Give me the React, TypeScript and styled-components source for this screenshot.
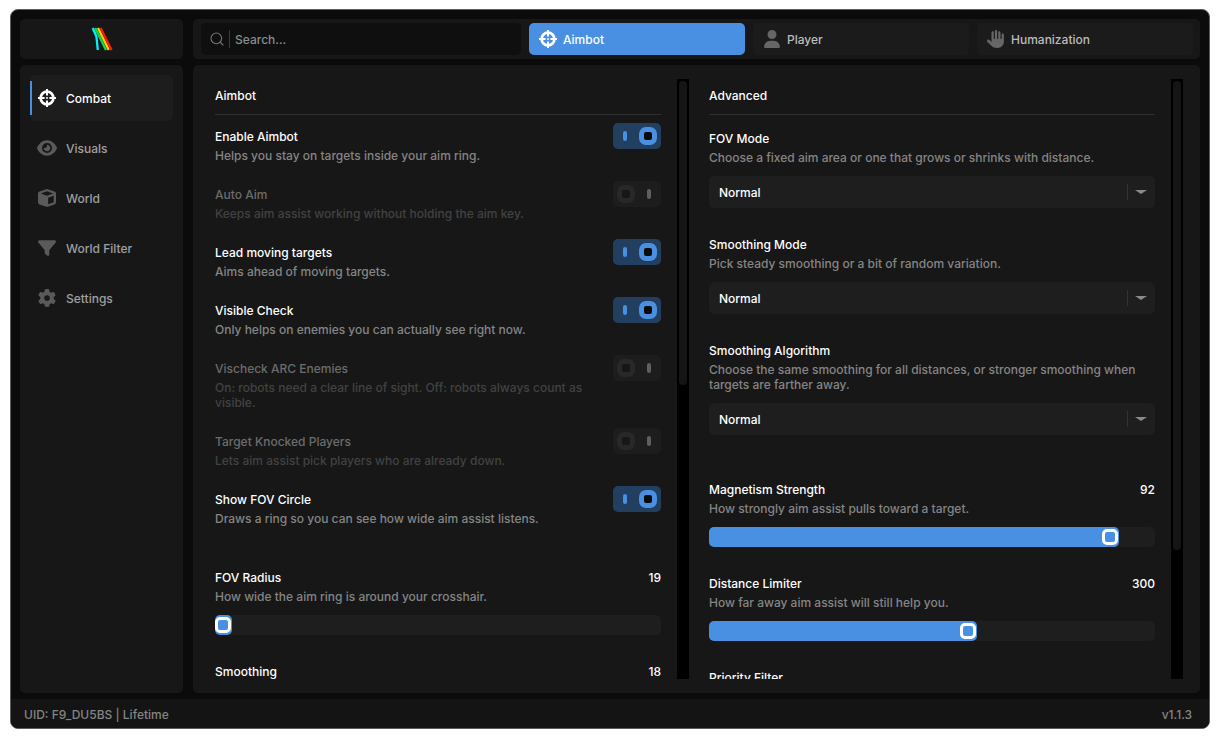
import React, { useId, useState } from "react";
import styled, { createGlobalStyle } from "styled-components";
import { FaCube, FaEye, FaFilter, FaGear, FaHand, FaUser } from "react-icons/fa6";
import { Search } from "lucide-react";

const color = {
  shell: "#0b0b0b",
  panel: "#171717",
  raised: "#1e1e1e",
  field: "#0f0f0f",
  accent: "#4a90e2",
  accentDim: "#233f60",
  line: "#303030",
  text: "#ffffff",
  muted: "#858585",
};

const GlobalStyle = createGlobalStyle`
  *, *::before, *::after { box-sizing: border-box; }
  body {
    margin: 0;
    background: #ffffff;
    font-family: Inter, "Liberation Sans", sans-serif;
    font-size: 12px;
    font-weight: 500;
    line-height: 15px;
  }
  button, input, select { font: inherit; }
  h2, h3, p { margin: 0; font: inherit; }
`;

const Page = styled.div`
  height: 100vh;
  padding: 9px 10px;
`;

const Shell = styled.div`
  height: 100%;
  display: flex;
  flex-direction: column;
  gap: 6px;
  overflow: hidden;
  border: 1px solid #5c5c5c;
  border-radius: 8px;
  background: ${color.shell};
  color: ${color.text};
`;

const Workspace = styled.div`
  flex: 1;
  min-height: 0;
  display: grid;
  grid-template-columns: 163px minmax(0, 1fr);
  grid-template-rows: 40px minmax(0, 1fr);
  gap: 6px 10px;
  padding: 9px 9px 0;
`;

const Panel = styled.div`
  border-radius: 5px;
  background: ${color.panel};
`;

const LogoPanel = styled(Panel)`
  display: flex;
  align-items: center;
  justify-content: center;
`;

const TopBar = styled(Panel).attrs({ as: "header" })`
  display: grid;
  grid-template-columns: minmax(0, 320fr) repeat(3, minmax(0, 216fr));
  gap: 8px;
  padding: 4px 7px 4px 8px;
`;

const SearchBox = styled.label`
  display: flex;
  align-items: center;
  gap: 4px;
  padding: 0 8px;
  border-radius: 5px;
  background: ${color.field};
  color: #777777;
`;

const SearchRule = styled.span`
  width: 1px;
  height: 18px;
  background: #3a3a3a;
`;

const SearchInput = styled.input`
  flex: 1;
  min-width: 0;
  padding: 0 1px;
  border: 0;
  outline: 0;
  background: transparent;
  color: ${color.text};
  &::placeholder { color: #8c8c8c; opacity: 1; }
`;

const Tab = styled.button<{ $active: boolean }>`
  display: flex;
  align-items: center;
  gap: 6px;
  padding: 0 10px;
  border: 0;
  border-radius: 5px;
  background: ${(p) => (p.$active ? color.accent : "#1b1b1b")};
  color: ${(p) => (p.$active ? "#ffffff" : "#bcbcbc")};
  cursor: pointer;
  svg { color: ${(p) => (p.$active ? "#ffffff" : "#666666")}; }
`;

const SideNav = styled(Panel).attrs({ as: "nav" })`
  display: flex;
  flex-direction: column;
  gap: 4px;
  padding: 10px;
`;

const NavItem = styled.button<{ $active: boolean }>`
  height: 46px;
  display: flex;
  align-items: center;
  gap: 4px;
  padding: 0;
  border: 0;
  border-radius: 5px;
  background: ${(p) => (p.$active ? "#1d1d1d" : "transparent")};
  color: ${(p) => (p.$active ? "#ffffff" : "#a0a0a0")};
  cursor: pointer;
  &::before {
    content: "";
    width: 2px;
    height: 34px;
    background: ${(p) => (p.$active ? color.accent : "transparent")};
  }
`;

const NavIcon = styled.span<{ $active: boolean }>`
  width: 22px;
  margin-right: 4px;
  display: flex;
  justify-content: center;
  color: ${(p) => (p.$active ? "#ffffff" : "#5a5a5a")};
`;

const Content = styled(Panel).attrs({ as: "main" })`
  display: grid;
  grid-template-columns: repeat(2, minmax(0, 1fr));
  gap: 20px;
  padding: 14px 17px 14px 22px;
`;

const Column = styled.section`
  min-height: 0;
  display: flex;
  gap: 16px;
`;

const ColumnBody = styled.div`
  flex: 1;
  min-width: 0;
  overflow-y: auto;
  scrollbar-width: none;
`;

const ScrollRail = styled.div`
  width: 12px;
  padding: 2px;
  background: #000000;
`;

const ScrollThumb = styled.div`
  border-radius: 4px;
  background: #151515;
`;

const SectionTitle = styled.h2`
  padding: 9px 0 11px;
  border-bottom: 1px solid ${color.line};
`;

const ToggleList = styled.div`
  padding-top: 8px;
`;

const ToggleRow = styled.div`
  display: flex;
  align-items: flex-start;
  justify-content: space-between;
  gap: 16px;
  padding-bottom: 18px;
`;

const ToggleText = styled.div<{ $dim: boolean }>`
  padding-top: 6px;
  color: ${(p) => (p.$dim ? "#6c6c6c" : color.text)};
  p { color: ${(p) => (p.$dim ? "#424242" : color.muted)}; }
`;

const Label = styled.label`
  display: block;
  margin-bottom: 4px;
`;

const Description = styled.p`
  color: ${color.muted};
`;

const Switch = styled.input`
  appearance: none;
  flex: none;
  width: 48px;
  height: 26px;
  margin: 0;
  padding: 0 4px 0 10px;
  display: flex;
  align-items: center;
  justify-content: space-between;
  border-radius: 5px;
  background: ${color.accentDim};
  cursor: pointer;
  &::before {
    content: "";
    width: 4px;
    height: 10px;
    border-radius: 2px;
    background: ${color.accent};
  }
  &::after {
    content: "";
    width: 18px;
    height: 18px;
    border: 5px solid ${color.accent};
    border-radius: 7px;
    background: ${color.shell};
  }
  &:not(:checked) {
    flex-direction: row-reverse;
    padding: 0 10px 0 4px;
    background: #1d1d1d;
  }
  &:not(:checked)::before { background: #5f5f5f; }
  &:not(:checked)::after { border-color: #282828; background: #171717; }
`;

const FieldGroup = styled.div<{ $top: number }>`
  display: flex;
  flex-direction: column;
  gap: 29px;
  padding-top: ${(p) => p.$top}px;
`;

const FieldHead = styled.div`
  display: flex;
  justify-content: space-between;
`;

const SelectFrame = styled.div`
  display: grid;
  align-items: center;
  margin-top: 11px;
  border-radius: 5px;
  background: ${color.raised};
  > * { grid-area: 1 / 1; }
`;

const SelectInput = styled.select`
  appearance: none;
  width: 100%;
  height: 32px;
  padding: 0 40px 0 10px;
  border: 0;
  border-radius: 5px;
  background: transparent;
  color: ${color.text};
  option { background: ${color.raised}; }
`;

const SelectMark = styled.span`
  justify-self: end;
  display: flex;
  align-items: center;
  height: 16px;
  padding: 0 8px 0 7px;
  border-left: 1px solid #333333;
  pointer-events: none;
`;

const SliderFrame = styled.div`
  display: grid;
  align-items: center;
  height: 20px;
  margin-top: 11px;
  border-radius: 5px;
  background: ${color.raised};
  > * { grid-area: 1 / 1; }
`;

const SliderFill = styled.span`
  display: flex;
  align-items: center;
  justify-content: flex-end;
  min-width: 17px;
  height: 20px;
  padding-right: 1px;
  border-radius: 5px;
  background: ${color.accent};
  &::after {
    content: "";
    width: 16px;
    height: 16px;
    border: 3px solid #ffffff;
    border-radius: 5px;
  }
`;

const SliderInput = styled.input`
  width: 100%;
  height: 20px;
  margin: 0;
  opacity: 0;
  cursor: pointer;
`;

const Footer = styled.footer`
  height: 29px;
  display: flex;
  align-items: center;
  justify-content: space-between;
  padding: 2px 17px 0 13px;
  background: #141414;
  color: ${color.muted};
`;

function Logo() {
  return (
    <svg width="24" height="24" viewBox="0 0 24 24" fill="none" strokeWidth="2.3" role="img" aria-label="Logo">
      <path d="M2.7 1 6.4 9.5 7.8 23" stroke="#00f0ff" />
      <path d="M5.2 1 16 23" stroke="#00e05a" />
      <path d="M8 1 18.8 23" stroke="#ffd000" />
      <path d="M10.6 1 21.6 23" stroke="#ff1a00" />
    </svg>
  );
}

function Crosshair({ size = 18 }: { size?: number }) {
  return (
    <svg width={size} height={size} viewBox="0 0 18 18" fill="none" stroke="currentColor">
      <circle cx="9" cy="9" r="6.4" strokeWidth="2.7" />
      <path d="M9 0v6.6M9 11.4V18M0 9h6.6M11.4 9H18" strokeWidth="2" />
      <circle cx="9" cy="9" r="1" fill="currentColor" stroke="none" />
    </svg>
  );
}

type ToggleProps = { title: string; text: string; on?: boolean };

function Toggle({ title, text, on = false }: ToggleProps) {
  const id = useId();
  const [checked, setChecked] = useState(on);
  return (
    <ToggleRow>
      <ToggleText $dim={!checked}>
        <Label htmlFor={id}>{title}</Label>
        <Description>{text}</Description>
      </ToggleText>
      <Switch id={id} type="checkbox" checked={checked} onChange={(e) => setChecked(e.target.checked)} />
    </ToggleRow>
  );
}

function Dropdown({ title, text }: { title: string; text?: string }) {
  const id = useId();
  return (
    <div>
      <Label htmlFor={id}>{title}</Label>
      {text && <Description>{text}</Description>}
      <SelectFrame>
        <SelectInput id={id} defaultValue="Normal">
          <option>Normal</option>
        </SelectInput>
        <SelectMark>
          <svg width="12" height="4" viewBox="0 0 12 4">
            <path d="M0 0h12L6 4z" fill="#8a8a8a" />
          </svg>
        </SelectMark>
      </SelectFrame>
    </div>
  );
}

type SliderProps = { title: string; text?: string; value: number; min?: number; max: number };

function Slider({ title, text, value, min = 0, max }: SliderProps) {
  const id = useId();
  const [current, setCurrent] = useState(value);
  return (
    <div>
      <FieldHead>
        <Label htmlFor={id}>{title}</Label>
        <output htmlFor={id}>{current}</output>
      </FieldHead>
      {text && <Description>{text}</Description>}
      <SliderFrame>
        <SliderFill style={{ width: `${((current - min) / (max - min)) * 100}%` }} />
        <SliderInput
          id={id}
          type="range"
          min={min}
          max={max}
          value={current}
          onChange={(e) => setCurrent(Number(e.target.value))}
        />
      </SliderFrame>
    </div>
  );
}

const tabs = [
  { name: "Aimbot", Icon: Crosshair },
  { name: "Player", Icon: FaUser },
  { name: "Humanization", Icon: FaHand },
];

const sections = [
  { name: "Combat", Icon: Crosshair, size: 18 },
  { name: "Visuals", Icon: FaEye, size: 20 },
  { name: "World", Icon: FaCube, size: 18 },
  { name: "World Filter", Icon: FaFilter, size: 18 },
  { name: "Settings", Icon: FaGear, size: 18 },
];

const toggles: ToggleProps[] = [
  { title: "Enable Aimbot", text: "Helps you stay on targets inside your aim ring.", on: true },
  { title: "Auto Aim", text: "Keeps aim assist working without holding the aim key." },
  { title: "Lead moving targets", text: "Aims ahead of moving targets.", on: true },
  { title: "Visible Check", text: "Only helps on enemies you can actually see right now.", on: true },
  {
    title: "Vischeck ARC Enemies",
    text: "On: robots need a clear line of sight. Off: robots always count as visible.",
  },
  { title: "Target Knocked Players", text: "Lets aim assist pick players who are already down." },
  { title: "Show FOV Circle", text: "Draws a ring so you can see how wide aim assist listens.", on: true },
];

export default function App() {
  const [tab, setTab] = useState("Aimbot");
  const [section, setSection] = useState("Combat");
  return (
    <Page>
      <GlobalStyle />
      <Shell>
        <Workspace>
          <LogoPanel>
            <Logo />
          </LogoPanel>
          <TopBar>
            <SearchBox>
              <Search size={16} strokeWidth={1.6} />
              <SearchRule />
              <SearchInput type="text" placeholder="Search..." aria-label="Search" />
            </SearchBox>
            {tabs.map(({ name, Icon }) => (
              <Tab key={name} type="button" $active={name === tab} onClick={() => setTab(name)}>
                <Icon size={18} />
                {name}
              </Tab>
            ))}
          </TopBar>
          <SideNav>
            {sections.map(({ name, Icon, size }) => (
              <NavItem key={name} type="button" $active={name === section} onClick={() => setSection(name)}>
                <NavIcon $active={name === section}>
                  <Icon size={size} />
                </NavIcon>
                {name}
              </NavItem>
            ))}
          </SideNav>
          <Content>
            <Column>
              <ColumnBody>
                <SectionTitle>Aimbot</SectionTitle>
                <ToggleList>
                  {toggles.map((t) => (
                    <Toggle key={t.title} {...t} />
                  ))}
                </ToggleList>
                <FieldGroup $top={26}>
                  <Slider
                    title="FOV Radius"
                    text="How wide the aim ring is around your crosshair."
                    value={19}
                    min={10}
                    max={500}
                  />
                  <Slider title="Smoothing" value={18} max={100} />
                </FieldGroup>
              </ColumnBody>
              <ScrollRail>
                <ScrollThumb style={{ height: "51%" }} />
              </ScrollRail>
            </Column>
            <Column>
              <ColumnBody>
                <SectionTitle>Advanced</SectionTitle>
                <FieldGroup $top={16}>
                  <Dropdown
                    title="FOV Mode"
                    text="Choose a fixed aim area or one that grows or shrinks with distance."
                  />
                  <Dropdown title="Smoothing Mode" text="Pick steady smoothing or a bit of random variation." />
                  <Dropdown
                    title="Smoothing Algorithm"
                    text="Choose the same smoothing for all distances, or stronger smoothing when targets are farther away."
                  />
                </FieldGroup>
                <FieldGroup $top={47}>
                  <Slider
                    title="Magnetism Strength"
                    text="How strongly aim assist pulls toward a target."
                    value={92}
                    max={100}
                  />
                  <Slider
                    title="Distance Limiter"
                    text="How far away aim assist will still help you."
                    value={300}
                    max={500}
                  />
                  <Dropdown title="Priority Filter" />
                </FieldGroup>
              </ColumnBody>
              <ScrollRail>
                <ScrollThumb style={{ height: "78.7%" }} />
              </ScrollRail>
            </Column>
          </Content>
        </Workspace>
        <Footer>
          <span>UID: F9_DU5BS | Lifetime</span>
          <span>v1.1.3</span>
        </Footer>
      </Shell>
    </Page>
  );
}
